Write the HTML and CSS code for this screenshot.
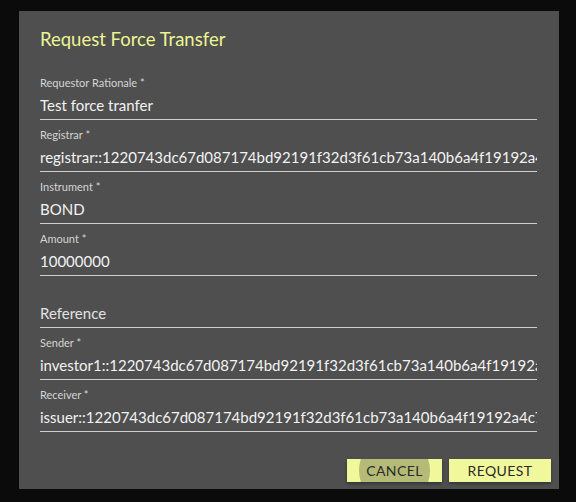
FILE: index.html
```html
<!DOCTYPE html>
<html>
<head>
<meta charset="utf-8">
<link rel="stylesheet" href="styles.css">
</head>
<body>
<div class="dialog">
  <h2 class="title">Request Force Transfer</h2>
  <div class="fields">
    <div class="field">
      <div class="label">Requestor Rationale *</div>
      <div class="value">Test force tranfer</div>
    </div>
    <div class="field">
      <div class="label">Registrar *</div>
      <div class="value">registrar::1220743dc67d087174bd92191f32d3f61cb73a140b6a4f19192a4c72e8f0b3d5a1</div>
    </div>
    <div class="field">
      <div class="label">Instrument *</div>
      <div class="value">BOND</div>
    </div>
    <div class="field">
      <div class="label">Amount *</div>
      <div class="value">10000000</div>
    </div>
    <div class="field">
      <div class="label"></div>
      <div class="value placeholder">Reference</div>
    </div>
    <div class="field">
      <div class="label">Sender *</div>
      <div class="value">investor1::1220743dc67d087174bd92191f32d3f61cb73a140b6a4f19192a4c72e8f0b3d5a1</div>
    </div>
    <div class="field">
      <div class="label">Receiver *</div>
      <div class="value">issuer::1220743dc67d087174bd92191f32d3f61cb73a140b6a4f19192a4c72e8f0b3d5a1</div>
    </div>
  </div>
  <div class="actions">
    <button class="btn btn-cancel"><span class="ripple"></span><span class="btn-text">CANCEL</span></button>
    <button class="btn btn-request"><span class="btn-text">REQUEST</span></button>
  </div>
</div>
</body>
</html>
```

FILE: styles.css
```css
html, body {
  margin: 0;
  padding: 0;
  background: #0b0b0b;
  font-family: Lato, "Open Sans", sans-serif;
}
body {
  padding: 11px 0 0 19px;
  height: 502px;
  box-sizing: border-box;
}
.dialog {
  width: 540px;
  height: 478px;
  box-sizing: border-box;
  background: #4f4f4f;
  padding: 16px 8px 0 21px;
  display: flex;
  flex-direction: column;
}
.title {
  margin: 0;
  font-weight: 400;
  font-size: 18.5px;
  line-height: 24px;
  color: #ebf593;
}
.fields {
  margin-top: 17px;
  width: 497px;
  display: flex;
  flex-direction: column;
}
.field {
  border-bottom: 1px solid #cfcfcf;
  padding-bottom: 4px;
}
.label {
  margin-top: 8px;
  font-size: 11px;
  line-height: 13px;
  height: 13px;
  color: #d4d4d4;
}
.value {
  margin-top: 6px;
  font-size: 15px;
  line-height: 20px;
  color: #f2f2f2;
  white-space: nowrap;
  overflow: hidden;
}
.value.placeholder {
  color: #e2e2e2;
}
.actions {
  margin-top: auto;
  margin-bottom: 7px;
  display: flex;
  justify-content: flex-end;
  gap: 7px;
}
.btn {
  position: relative;
  overflow: hidden;
  height: 23px;
  padding: 0;
  border: none;
  border-radius: 0;
  background: #f0f89b;
  color: #2b2b2b;
  font-family: Lato, "Open Sans", sans-serif;
  font-size: 14px;
  letter-spacing: 0.4px;
  box-shadow: 0 2px 3px rgba(0, 0, 0, 0.35);
  cursor: pointer;
}
.btn-cancel {
  width: 95px;
}
.btn-request {
  width: 102px;
}
.btn-text {
  position: relative;
}
.ripple {
  position: absolute;
  left: 50%;
  top: 50%;
  width: 71px;
  height: 71px;
  margin: -35.5px 0 0 -35.5px;
  border-radius: 50%;
  background: #b5bb76;
}
```
